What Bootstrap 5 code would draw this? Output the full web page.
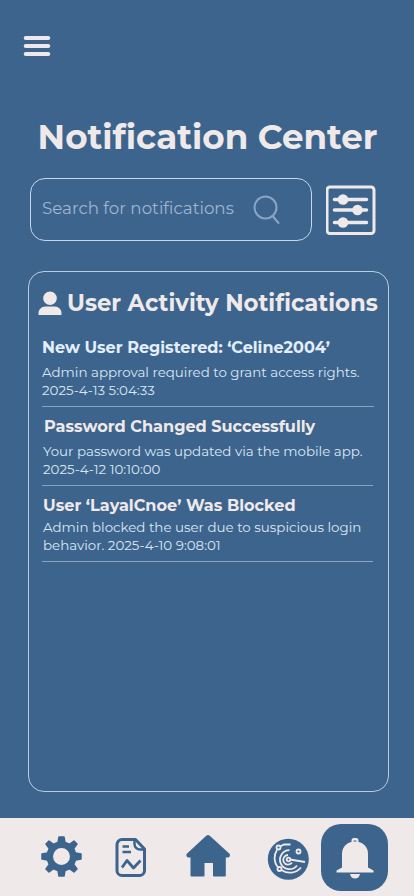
<!DOCTYPE html>
<html lang="en">
<head>
<meta charset="utf-8">
<meta name="viewport" content="width=device-width, initial-scale=1">
<title>Notification Center</title>
<link href="https://cdn.jsdelivr.net/npm/bootstrap@5.3.0/dist/css/bootstrap.min.css" rel="stylesheet">
<style>
  :root { --blue: #3d648d; --paper: #efe9ea; --ice: #e3eefb; }
  body { background: var(--blue); color: var(--paper); font-family: Montserrat, "Open Sans", sans-serif; }
  .screen { width: 414px; height: 896px; }
  .topbar { height: 117px; padding: 36px 0 0 23px; }
  .page-title { font-size: 34.1px; line-height: 41px; padding-left: 1px; }
  .search-row { margin: 20px 38px 0 30px; }
  .search-box { width: 282px; height: 63px; border: 1px solid #c3d8ee; border-radius: 15px; padding: 0 30px 0 11px; }
  .search-box span { font-size: 16.7px; line-height: 20px; color: #9db6d3; padding-bottom: 3px; }
  .panel { width: 361px; height: 521px; margin: 30px 0 0 28px; border: 1px solid #b9cde2; border-radius: 16px; padding: 18px 0 0 9px; }
  .panel-title { font-size: 22.75px; line-height: 26px; }
  .panel-title svg { margin-right: 5px; }
  .item { width: 331px; margin-left: 4px; border-bottom: 1px solid #88a4c3; padding-bottom: 7px; }
  .item h3 { font-size: 16.05px; line-height: 20px; color: var(--ice); }
  .item p { font-size: 13.4px; line-height: 18px; color: #dbe7f5; white-space: nowrap; }
  .item-registered { margin-top: 21px; width: 332px; }
  .item-registered h3 { margin-bottom: 6px; }
  .item-password { margin-top: 9px; }
  .item-password h3 { font-size: 16.1px; margin-bottom: 6px; padding-left: 2px; color: var(--paper); }
  .item-password p, .item-blocked p, .item-blocked h3 { padding-left: 1px; }
  .item-blocked { margin-top: 9px; }
  .item-blocked h3 { font-size: 16.1px; margin-bottom: 3px; color: var(--paper); }
  .tabs { height: 78px; background: var(--paper); color: var(--blue); padding: 6px 26px 0 41px; }
  .tab-report { margin-left: 33px; }
  .tab-home { margin-left: 39px; }
  .tab-radar { margin-left: 36px; }
  .tab-active { width: 67px; height: 67px; border-radius: 20px; background: var(--blue); color: var(--paper); }
</style>
</head>
<body>
<main class="screen d-flex flex-column overflow-hidden">
  <header class="topbar">
    <svg class="d-block" width="28" height="21" viewBox="0 0 28 21" stroke="currentColor" stroke-width="4" stroke-linecap="round"><path d="M2.700 2H25.300M2.700 10H25.300M2.700 18H25.300"/></svg>
  </header>

  <h1 class="page-title text-center fw-bold text-nowrap mb-0">Notification Center</h1>

  <div class="search-row d-flex align-items-center justify-content-between">
    <div class="search-box d-flex align-items-center justify-content-between text-nowrap">
      <span>Search for notifications</span>
      <svg width="28" height="30" viewBox="0 0 28 30" fill="none" stroke="#89a5c5" stroke-width="2" stroke-linecap="round"><circle cx="12.500" cy="12.500" r="11"/><path d="M20 21.500L25.500 28"/></svg>
    </div>
    <svg width="50" height="50" viewBox="0 0 50 50" fill="none" stroke="currentColor" stroke-width="3"><rect x="1" y="2" width="47" height="46.500" rx="3"/><path stroke-width="3.600" stroke-linecap="round" d="M8.500 14.500H40.500M8.500 25H40.500M8.500 37.500H40.500"/><g fill="currentColor" stroke="none"><circle cx="17" cy="14.500" r="5.300"/><circle cx="31.500" cy="25" r="5.300"/><circle cx="17" cy="37.500" r="5.300"/></g></svg>
  </div>

  <section class="panel flex-shrink-0">
    <div class="panel-title d-flex align-items-center text-nowrap fw-bold">
      <svg class="flex-shrink-0" width="24" height="24" viewBox="0 0 24 24" fill="currentColor"><circle cx="12" cy="7.300" r="6.800"/><path d="M0.500 24V22C.5 18.500 3.500 15.500 7 15.500H17C20.500 15.500 23.500 18.500 23.500 22V24Z"/></svg>
      <span>User Activity Notifications</span>
    </div>
    <article class="item item-registered">
      <h3 class="fw-bold">New User Registered: ‘Celine2004’</h3>
      <p class="mb-0">Admin approval required to grant access rights.<br>2025-4-13 5:04:33</p>
    </article>
    <article class="item item-password">
      <h3 class="fw-bold">Password Changed Successfully</h3>
      <p class="mb-0">Your password was updated via the mobile app.<br>2025-4-12 10:10:00</p>
    </article>
    <article class="item item-blocked">
      <h3 class="fw-bold">User ‘LayalCnoe’ Was Blocked</h3>
      <p class="mb-0">Admin blocked the user due to suspicious login<br>behavior. 2025-4-10 9:08:01</p>
    </article>
  </section>

  <nav class="tabs d-flex align-items-start mt-auto">
    <svg class="mt-2 pt-1" width="41" height="45" viewBox="0 0 41 41" fill="currentColor"><path fill="currentColor" stroke="currentColor" stroke-width="1.500" stroke-linejoin="round" fill-rule="evenodd" d="M18 1H23L24 6.500L28.500 8.300L33 5L36 8L32.700 12.500L34.500 17L40 18V23L34.500 24L32.700 28.500L36 33L33 36L28.500 32.700L24 34.500L23 40H18L17 34.500L12.500 32.700L8 36L5 33L8.300 28.500L6.500 24L1 23V18L6.500 17L8.300 12.500L5 8L8 5L12.500 8.300L17 6.500ZM20.500 11.300A9.200 9.200 0 1 0 20.500 29.700A9.200 9.200 0 1 0 20.500 11.300Z"/></svg>
    <svg class="tab-report" width="32" height="66" viewBox="0 0 32 66" fill="none" stroke="currentColor" stroke-width="3"><path stroke-linejoin="round" d="M7 15.500H20.500L29.500 25V46.500A5 5 0 0 1 24.500 51.500H7A5 5 0 0 1 2 46.500V20.500A5 5 0 0 1 7 15.500Z"/><path stroke-width="2.500" d="M19.500 16V20A5.500 5.500 0 0 0 25 25.500H29M7.500 22.500H14M7.500 28H16"/><path stroke-width="2.800" stroke-linejoin="round" d="M7 43.500L12 36.500L18.500 44L25.500 36.500"/></svg>
    <svg class="tab-home" width="45" height="66" viewBox="0 0 45 66" fill="currentColor" stroke="currentColor" stroke-width="2" stroke-linejoin="round"><path d="M21.200 12.300Q22 11.500 22.800 12.300L42.800 30.500Q43.300 32 41.800 32.500H38.800V51.500H28V38H17.500V51.500H5.500V32.500H2.500Q1 32 1.500 30.500Z"/></svg>
    <svg class="tab-radar" width="43" height="66" viewBox="0 0 43 66" fill="none" stroke="var(--paper)" stroke-width="1.800"><circle cx="21.300" cy="35.200" r="20.500" fill="var(--blue)" stroke="none"/><path d="M23.500 20.500H17L13 22.500M10 26A14.500 14.500 0 0 0 11 43.500M14.500 46A14.500 14.500 0 0 0 34 43.500"/><path d="M22.500 26.200A9.500 9.500 0 1 0 30 41.500M21 31A4.800 4.800 0 1 0 25 38.500"/><path d="M23 35.500L38 38"/><circle cx="11.500" cy="23.500" r="2"/><circle cx="31.500" cy="27.500" r="2"/><circle cx="12.500" cy="45" r="2"/><circle cx="21.500" cy="35.500" r="1.800"/></svg>
    <div class="tab-active d-flex justify-content-center align-items-center ms-auto">
      <svg width="38" height="42" viewBox="0 0 38 42" fill="currentColor"><path d="M.5 35.500V33.500L6 30.500V17C6 10 10.500 6 15.500 5V3.500Q15.500 1 18 1H20Q22.500 1 22.500 3.500V5C27.500 6 32 10 32 17V30.500L37.500 33.500V35.500ZM14 37H24Q23 41.500 19 41.500Q15 41.500 14 37Z"/><path d="M17.500 4.500V3.500H20.500V4.500Z" fill="var(--blue)"/></svg>
    </div>
  </nav>
</main>
<script src="https://cdn.jsdelivr.net/npm/bootstrap@5.3.0/dist/js/bootstrap.bundle.min.js"></script>
</body>
</html>
